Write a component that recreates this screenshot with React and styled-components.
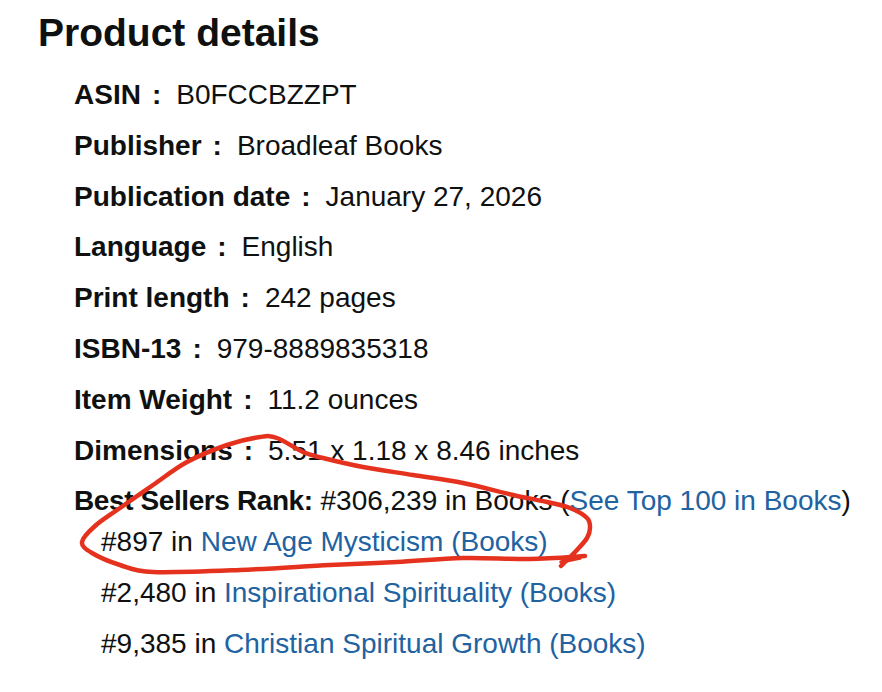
import styled, { createGlobalStyle } from "styled-components";

const GlobalStyle = createGlobalStyle`
  body {
    margin: 0;
    background: #ffffff;
  }
`;

const Page = styled.div`
  position: relative;
  width: 882px;
  height: 692px;
  overflow: hidden;
  font-family: "Liberation Sans", Arial, sans-serif;
  color: #0f1111;
`;

const Title = styled.h2`
  margin: 0;
  padding: 10px 0 0 38px;
  font-size: 39px;
  line-height: 46px;
  font-weight: 700;
`;

const DetailList = styled.ul`
  list-style: none;
  margin: 22px 0 0 0;
  padding: 0 0 0 74px;
`;

const Row = styled.li`
  font-size: 28px;
  line-height: 34px;
  margin-bottom: 16.8px;
  white-space: nowrap;
`;

const Label = styled.span`
  font-weight: 700;
`;

const Colon = styled.span`
  font-weight: 700;
  margin: 0 15px 0 11px;
`;

const RankLabel = styled.span`
  font-weight: 700;
  letter-spacing: -0.4px;
`;

const RankList = styled.ul`
  list-style: none;
  margin: 7px 0 0 0;
  padding: 0 0 0 27px;
`;

const RankItem = styled.li`
  font-size: 28px;
  line-height: 34px;
  & + & {
    margin-top: 16.8px;
  }
`;

const Link = styled.a`
  color: #2162a1;
  text-decoration: none;
`;

const Annotation = styled.svg`
  position: absolute;
  left: 0;
  top: 0;
  pointer-events: none;
`;

const details = [
  ["ASIN", "B0FCCBZZPT"],
  ["Publisher", "Broadleaf Books"],
  ["Publication date", "January 27, 2026"],
  ["Language", "English"],
  ["Print length", "242 pages"],
  ["ISBN-13", "979-8889835318"],
  ["Item Weight", "11.2 ounces"],
  ["Dimensions", "5.51 x 1.18 x 8.46 inches"],
];

const ranks = [
  ["#897", "New Age Mysticism (Books)"],
  ["#2,480", "Inspirational Spirituality (Books)"],
  ["#9,385", "Christian Spiritual Growth (Books)"],
];

// hand-drawn loop around the first sub-rank
const loop = [
  [585, 556], [530, 559], [463, 558], [397, 562], [330, 565], [240, 570],
  [153, 572], [120, 565], [92, 553], [82, 542], [95, 526], [120, 508],
  [153, 485], [187, 462], [227, 445], [260, 437], [277, 438], [303, 452],
  [323, 458], [363, 467], [413, 475], [463, 483], [513, 495], [547, 502],
  [570, 508], [587, 518], [590, 528], [587, 538], [577, 550], [567, 560],
  [561, 566],
];

const smoothPath = pts => {
  let d = `M ${pts[0][0]} ${pts[0][1]}`;
  for (let i = 0; i < pts.length - 1; i++) {
    const p0 = pts[i - 1] || pts[i];
    const p1 = pts[i];
    const p2 = pts[i + 1];
    const p3 = pts[i + 2] || p2;
    const c1 = [p1[0] + (p2[0] - p0[0]) / 6, p1[1] + (p2[1] - p0[1]) / 6];
    const c2 = [p2[0] - (p3[0] - p1[0]) / 6, p2[1] - (p3[1] - p1[1]) / 6];
    d += ` C ${c1[0]} ${c1[1]} ${c2[0]} ${c2[1]} ${p2[0]} ${p2[1]}`;
  }
  return d;
};

export default () => {
  return (
    <Page>
      <GlobalStyle />
      <Title>Product details</Title>
      <DetailList>
        {details.map(([label, value]) => (
          <Row key={label}>
            <Label>{label}</Label>
            <Colon>:</Colon>
            <span>{value}</span>
          </Row>
        ))}
        <Row>
          <RankLabel>Best Sellers Rank:</RankLabel> #306,239 in Books (
          <Link href="#">See Top 100 in Books</Link>)
          <RankList>
            {ranks.map(([rank, category]) => (
              <RankItem key={rank}>
                {rank} in <Link href="#">{category}</Link>
              </RankItem>
            ))}
          </RankList>
        </Row>
      </DetailList>
      <Annotation width="882" height="692" viewBox="0 0 882 692">
        <path
          d={smoothPath(loop)}
          fill="none"
          stroke="#e5321f"
          strokeWidth="4.5"
          strokeLinecap="round"
          strokeLinejoin="round"
        />
        <path
          d="M 561 562 L 580 558"
          fill="none"
          stroke="#e5321f"
          strokeWidth="3.5"
          strokeLinecap="round"
        />
      </Annotation>
    </Page>
  );
};
